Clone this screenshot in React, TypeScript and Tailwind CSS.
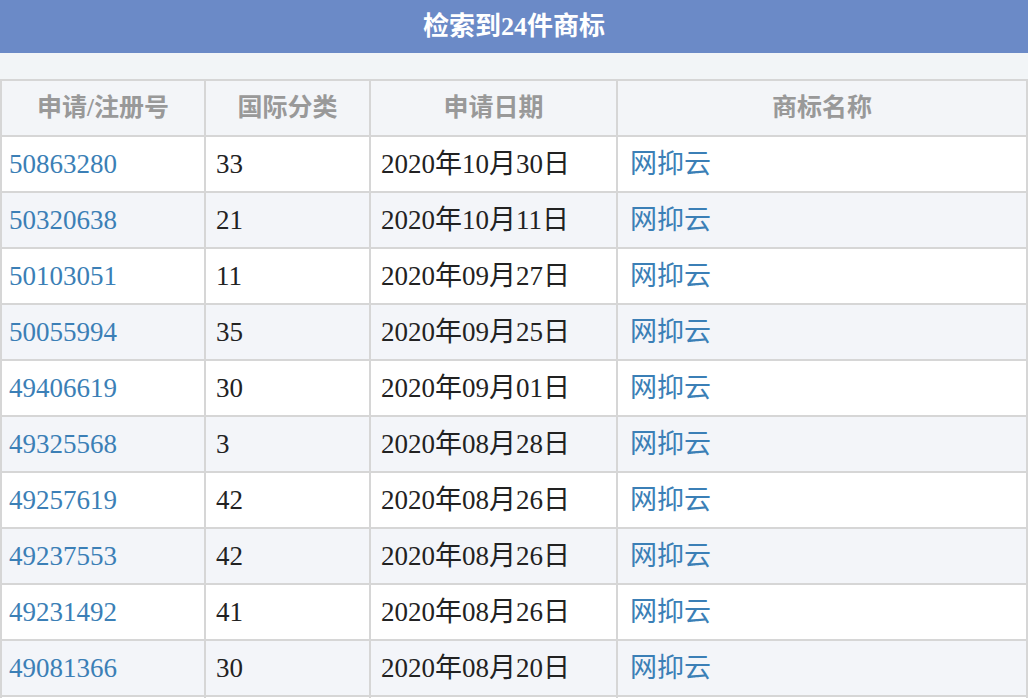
const rows = [
["50863280","33","2020年10月30日"],
["50320638","21","2020年10月11日"],
["50103051","11","2020年09月27日"],
["50055994","35","2020年09月25日"],
["49406619","30","2020年09月01日"],
["49325568","3","2020年08月28日"],
["49257619","42","2020年08月26日"],
["49237553","42","2020年08月26日"],
["49231492","41","2020年08月26日"],
["49081366","30","2020年08月20日"],
["49000000","30","2020年08月20日"],
];
const f = { fontFamily: '"Liberation Serif","Noto Sans CJK SC",serif' };
export default function App() {
  return (
    <div className="w-[1028px] h-[698px] overflow-hidden bg-[#f2f5f7]" style={f}>
      <div className="h-[53px] bg-[#6b8ac7] flex items-center justify-center text-white text-[26px] font-bold">检索到24件商标</div>
      <div className="h-[26px]" />
      <table className="w-full border-collapse table-fixed">
        <colgroup><col className="w-[204px]" /><col className="w-[165px]" /><col className="w-[247px]" /><col /></colgroup>
        <thead>
          <tr className="h-[56px] bg-[#f3f5f8] text-[#999] text-[25px] font-bold">
            {["申请/注册号","国际分类","申请日期","商标名称"].map(h => <th key={h} className="border-2 border-[#d6d6d6] font-bold">{h}</th>)}
          </tr>
        </thead>
        <tbody>
          {rows.map((r, i) => (
            <tr key={i} className={`h-[56px] text-[27px] ${i % 2 ? "bg-[#f3f5f9]" : "bg-white"}`}>
              <td className="border-2 border-[#d6d6d6] pl-[7px] text-[#3b7fb6]">{r[0]}</td>
              <td className="border-2 border-[#d6d6d6] pl-[10px] text-[#222]">{r[1]}</td>
              <td className="border-2 border-[#d6d6d6] pl-[10px] text-[#222]">{r[2]}</td>
              <td className="border-2 border-[#d6d6d6] pl-[12px] text-[#3b7fb6]">网抑云</td>
            </tr>
          ))}
        </tbody>
      </table>
    </div>
  );
}
